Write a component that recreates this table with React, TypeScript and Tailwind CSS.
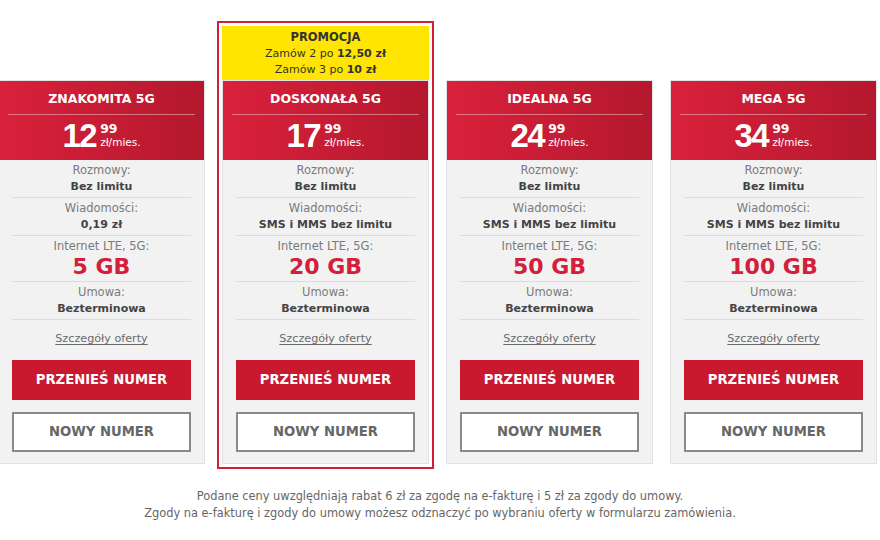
import React from 'react';

type Plan = {
  name: string;
  whole: string;
  cents: string;
  sms: string;
  data: string;
  promo?: boolean;
};

const plans: Plan[] = [
  { name: 'ZNAKOMITA 5G', whole: '12', cents: '99', sms: '0,19 zł', data: '5 GB' },
  { name: 'DOSKONAŁA 5G', whole: '17', cents: '99', sms: 'SMS i MMS bez limitu', data: '20 GB', promo: true },
  { name: 'IDEALNA 5G', whole: '24', cents: '99', sms: 'SMS i MMS bez limitu', data: '50 GB' },
  { name: 'MEGA 5G', whole: '34', cents: '99', sms: 'SMS i MMS bez limitu', data: '100 GB' },
];

const Row = ({ label, children, tall }: { label: string; children: React.ReactNode; tall?: boolean }) => (
  <div className={`flex flex-col items-center justify-center border-b border-[#dcdcdc] ${tall ? 'h-[46px]' : 'h-[38px]'}`}>
    <div className="text-[11.5px] leading-4 text-[#7a7a7a]">{label}</div>
    {children}
  </div>
);

const Card = ({ plan }: { plan: Plan }) => (
  <div className="w-[207px] shrink-0 border border-[#e3e3e3] bg-[#f2f2f2]">
    {/* header */}
    <div className="h-[79px] bg-gradient-to-r from-[#da213b] to-[#b4182e] px-[9px] pt-[9px] text-white">
      <div className="text-center text-[12.5px] font-bold leading-[17px]">{plan.name}</div>
      <div className="mt-[7px] h-px bg-white/40" />
      <div className="mt-[7px] flex items-start justify-center">
        <span className="font-['Liberation_Sans',sans-serif] text-[33px] font-bold leading-[28px] tracking-[-1.5px]">
          {plan.whole}
        </span>
        <span className="ml-[4px] flex flex-col">
          <span className="text-[12.5px] font-bold leading-[13px]">{plan.cents}</span>
          <span className="text-[10.5px] leading-[14px]">zł/mies.</span>
        </span>
      </div>
    </div>

    {/* details */}
    <div className="px-[13px]">
      <Row label="Rozmowy:">
        <div className="text-[11px] font-bold leading-[17px] text-[#444]">Bez limitu</div>
      </Row>
      <Row label="Wiadomości:">
        <div className="text-[11px] font-bold leading-[17px] text-[#444]">{plan.sms}</div>
      </Row>
      <Row label="Internet LTE, 5G:" tall>
        <div className="text-[22px] font-bold leading-[26px] text-[#d3203a]">{plan.data}</div>
      </Row>
      <Row label="Umowa:">
        <div className="text-[11px] font-bold leading-[17px] text-[#444]">Bezterminowa</div>
      </Row>

      <div className="mt-[11px] text-center text-[11.2px] leading-4 text-[#6a6a6a] underline underline-offset-2">
        Szczegóły oferty
      </div>

      <button className="mt-[13px] flex h-[40px] w-full items-center justify-center bg-[#c9192f] text-[13.2px] font-bold text-white">
        PRZENIEŚ NUMER
      </button>
      <button className="mt-[12px] mb-[11px] flex h-[40px] w-full items-center justify-center border-2 border-[#8a8a8a] bg-white text-[13.2px] font-bold text-[#666]">
        NOWY NUMER
      </button>
    </div>
  </div>
);

export default function App() {
  return (
    <div className="min-h-[540px] bg-white pt-[26px] font-['DejaVu_Sans',sans-serif]">
      <div className="ml-[-2px] flex items-end gap-[17px]">
        {plans.map((plan) =>
          plan.promo ? (
            <div key={plan.name} className="flex w-[207px] shrink-0 flex-col outline-2 outline-offset-[3px] outline-[#d3203a]">
              <div className="h-[54px] bg-[#ffe500] pt-[3px] text-center text-[11px] leading-[16.5px] text-[#333]">
                <div className="text-[11.5px] font-bold">PROMOCJA</div>
                <div>
                  Zamów 2 po <span className="font-bold">12,50 zł</span>
                </div>
                <div>
                  Zamów 3 po <span className="font-bold">10 zł</span>
                </div>
              </div>
              <Card plan={plan} />
            </div>
          ) : (
            <Card key={plan.name} plan={plan} />
          )
        )}
      </div>

      <div className="mt-[24px] text-center text-[11.4px] leading-[17px] text-[#666]">
        <p>Podane ceny uwzględniają rabat 6 zł za zgodę na e-fakturę i 5 zł za zgody do umowy.</p>
        <p>Zgody na e-fakturę i zgody do umowy możesz odznaczyć po wybraniu oferty w formularzu zamówienia.</p>
      </div>
    </div>
  );
}
